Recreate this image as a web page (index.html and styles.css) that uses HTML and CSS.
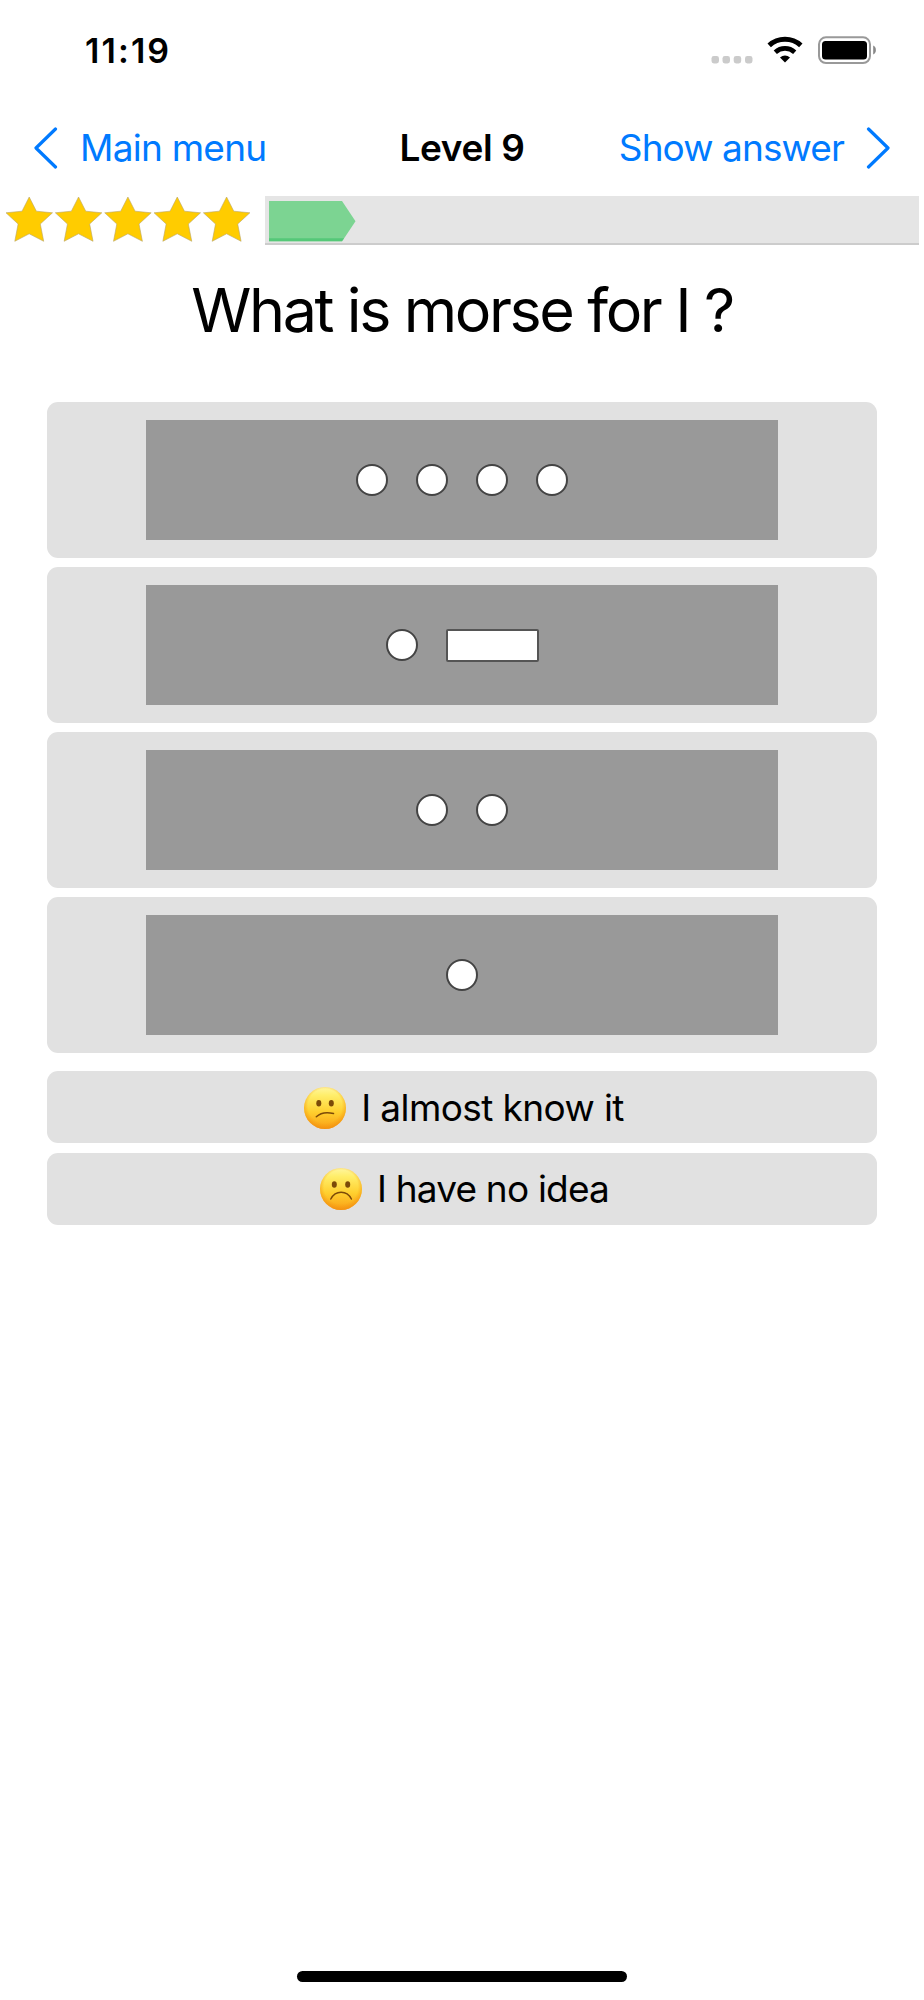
FILE: index.html
```
<!DOCTYPE html>
<html lang="en">
<head>
<meta charset="utf-8">
<title>Level 9</title>
<link rel="stylesheet" href="styles.css">
</head>
<body>
<div class="screen">
  <header class="status">
    <span class="time">11:19</span>
    <div class="indicators">
      <svg class="signal" width="42" height="8" viewBox="0 0 42 8" fill="#cbcbcb"><rect x=".5" width="7.500" height="7.500" rx="2.400"/><rect x="11.500" width="7.500" height="7.500" rx="2.400"/><rect x="22.700" width="7.500" height="7.500" rx="2.400"/><rect x="34" width="7.500" height="7.500" rx="2.400"/></svg>
      <svg class="wifi" width="36" height="27" viewBox="0 0 36 27" fill="none" stroke="#000"><path d="M2.200 9.400C11 1.200 25 1.200 33.800 9.400" stroke-width="5"/><path d="M8.300 16.200c5.600-5 13.800-5 19.400 0" stroke-width="4.800"/><path d="M13 21.400c3-2.700 7-2.700 10 0L18 26.500z" fill="#000" stroke="none"/></svg>
      <svg class="battery" width="60" height="28" viewBox="0 0 60 28"><rect x="2" y="1.300" width="51" height="25.700" rx="7" fill="none" stroke="#999" stroke-width="2"/><rect x="5" y="5" width="45" height="18.500" rx="3.500"/><path d="M56.200 9.500c3.600 1.200 3.600 7.800 0 9z" fill="#888"/></svg>
    </div>
  </header>
  <nav class="nav">
    <a class="link back"><svg width="24" height="42" viewBox="0 0 24 42"><path d="M21.500 2L2 21l19.500 19"/></svg><span>Main menu</span></a>
    <h1 class="level">Level 9</h1>
    <a class="link next"><span>Show answer</span><svg width="24" height="42" viewBox="0 0 24 42"><path d="M2.500 2L22 21 2.500 40"/></svg></a>
  </nav>
  <div class="progress">
    <svg class="stars" width="247" height="47" viewBox="0 0 247 47">
      <defs><path id="star" d="M24.200 1l7.200 14.200 16.100 1.600-12.200 11.200 3.400 17.300-14.500-7.500-14.400 7.500 3.300-17.300L1 16.800l16-1.600z" fill="#fc0" stroke="#b8a468" stroke-width=".6"/></defs>
      <use href="#star"/><use href="#star" x="49.350"/><use href="#star" x="98.700"/><use href="#star" x="148.050"/><use href="#star" x="197.400"/>
    </svg>
    <div class="track"><svg width="87" height="41" viewBox="0 0 87 41"><path d="M0 0h73l13.500 20.300L73 40.500H0z" fill="#7cd492"/><path d="M0 37.300h75.100L73 40H0z" fill="#55c878"/></svg></div>
  </div>
  <h2 class="question">What is morse for I ?</h2>
  <main class="answers">
    <button class="card"><span class="morse"><i class="dot"></i><i class="dot"></i><i class="dot"></i><i class="dot"></i></span></button>
    <button class="card"><span class="morse"><i class="dot"></i><i class="dash"></i></span></button>
    <button class="card"><span class="morse"><i class="dot"></i><i class="dot"></i></span></button>
    <button class="card"><span class="morse"><i class="dot"></i></span></button>
  </main>
  <div class="hints">
    <button class="hint almost"><svg width="44" height="44" viewBox="0 0 44 44"><defs><linearGradient id="face" x1="0" y1="0" x2="0" y2="1"><stop offset="0" stop-color="#fff6a0"/><stop offset=".2" stop-color="#ffee6a"/><stop offset=".6" stop-color="#ffcf2e"/><stop offset="1" stop-color="#f99f16"/></linearGradient><radialGradient id="rim" cx=".5" cy=".45" r=".56"><stop offset=".72" stop-color="#f5960c" stop-opacity="0"/><stop offset="1" stop-color="#f08a10" stop-opacity=".75"/></radialGradient></defs><circle cx="22" cy="22" r="21" fill="url(#face)"/><circle cx="22" cy="22" r="21" fill="url(#rim)"/><g fill="#7c4a08"><ellipse cx="15.800" cy="17.200" rx="2.500" ry="3.200"/><ellipse cx="28.300" cy="17.200" rx="2.500" ry="3.200"/></g><path d="M13.300 30.700c4-3.800 10.500-4.800 17.200-3.200" fill="none" stroke="#7c4a08" stroke-width="1.500" stroke-linecap="round"/></svg><span>I almost know it</span></button>
    <button class="hint none"><svg width="44" height="44" viewBox="0 0 44 44"><circle cx="22" cy="22" r="21" fill="url(#face)"/><circle cx="22" cy="22" r="21" fill="url(#rim)"/><g fill="#7c4a08"><ellipse cx="15.300" cy="17.500" rx="2.500" ry="3.200"/><ellipse cx="28.700" cy="17.500" rx="2.500" ry="3.200"/></g><path d="M11.800 32c4.700-9 16-9 20.600 0" fill="none" stroke="#7c4a08" stroke-width="1.500" stroke-linecap="round"/></svg><span>I have no idea</span></button>
  </div>
  <div class="home"></div>
</div>
</body>
</html>
```
FILE: styles.css
```
* { box-sizing: border-box; margin: 0; }
body { background: #fff; color: #000; font-family: Inter, "Liberation Sans", sans-serif; }
svg { display: block; flex: none; }
span { white-space: nowrap; }
.screen { width: 924px; height: 2000px; display: flex; flex-direction: column; overflow: hidden; }
.status { height: 104px; display: flex; justify-content: space-between; align-items: flex-start; padding: 36px 47px 0 85px; }
.time { font-size: 34px; line-height: 30px; font-weight: 600; letter-spacing: 2.1px; }
.indicators { display: flex; align-items: flex-start; }
.signal { margin-top: 20px; }
.wifi { margin-left: 14px; }
.battery { margin-left: 14px; }
.nav { height: 92px; display: grid; grid-template-columns: 1fr auto 1fr; align-items: center; padding: 0 34px 4px; font-size: 37px; line-height: 44px; }
.link { display: flex; align-items: center; color: #007aff; }
.link svg { fill: none; stroke: #007aff; stroke-width: 3.2; stroke-linecap: round; stroke-linejoin: round; }
.back { gap: 22px; letter-spacing: -0.75px; }
.next { gap: 22px; justify-content: flex-end; letter-spacing: -0.9px; }
.level { font-size: 37px; font-weight: 600; letter-spacing: -0.4px; }
.progress { height: 50px; display: flex; padding: 0 5px; }
.track { flex: 1; height: 49px; margin-left: 13px; padding: 5px 4px; background: #e5e5e5; border-bottom: 2px solid #ccc; }
.question { height: 156px; padding-top: 24px; text-align: center; font-weight: 400; font-size: 61px; line-height: 80px; letter-spacing: -2.4px; }
.answers { display: flex; flex-direction: column; gap: 9px; padding: 0 47px; }
.card { height: 156px; padding: 18px 99px; border: 0; border-radius: 11px; background: #e1e1e1; }
.morse { height: 120px; display: flex; align-items: center; justify-content: center; gap: 28px; background: #999; }
.dot { width: 32px; height: 32px; border: 2px solid #444; border-radius: 50%; background: #fff; }
.dash { width: 93px; height: 33px; border: 2px solid #555; border-radius: 2px; background: #fff; }
.hints { display: flex; flex-direction: column; gap: 10px; padding: 18px 47px 0; }
.hint { height: 72px; display: flex; align-items: center; justify-content: center; gap: 14px; border: 0; border-radius: 11px; background: #e1e1e1; font: 37px/44px Inter, "Liberation Sans", sans-serif; color: #000; }
.almost { padding: 2px 0 0 3px; letter-spacing: -0.6px; }
.none { padding: 0 0 0 4px; letter-spacing: -0.8px; }
.home { width: 330px; height: 11px; margin: auto auto 18px; border-radius: 6px; background: #000; }
```
